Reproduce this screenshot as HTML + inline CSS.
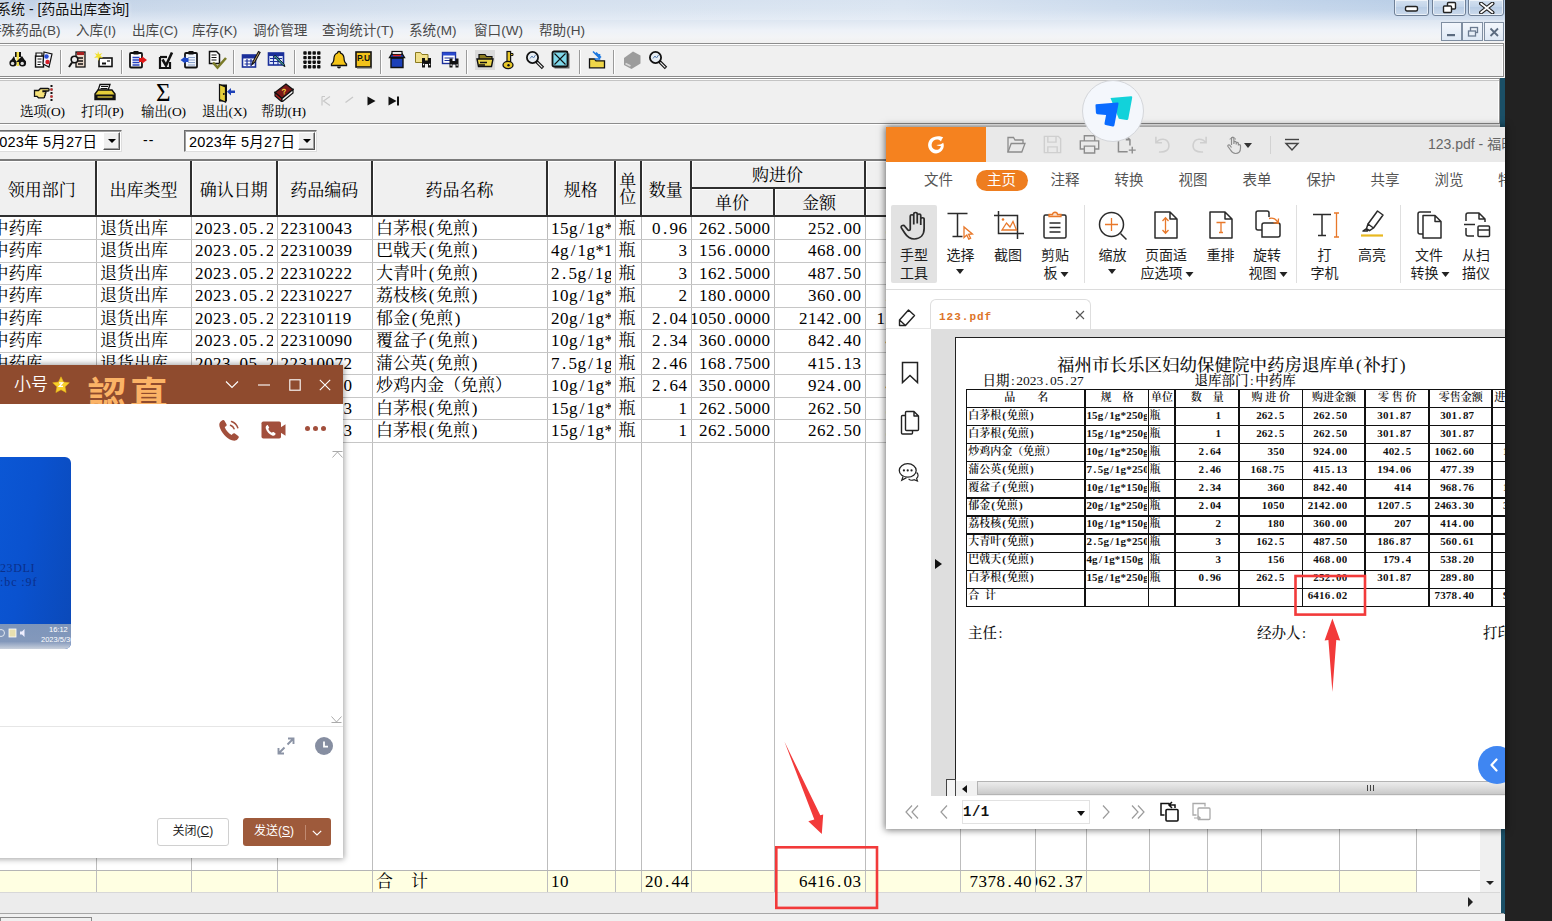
<!DOCTYPE html><html lang="zh-CN"><head><meta charset="utf-8"><title>药品出库查询</title><style>
*{box-sizing:border-box;margin:0;padding:0}
html,body{width:1552px;height:921px;overflow:hidden}
body{position:relative;background:#f0f0f0;font-family:"Liberation Sans","Noto Sans CJK SC",sans-serif;font-size:14px;color:#000}
.a{position:absolute}
i.p{display:inline-block;font-style:normal;text-align:center}
.sf{font-family:"Liberation Serif","Noto Serif CJK SC",serif}
#main{left:0;top:0;width:1505px;height:921px;background:#f0f0f0;overflow:hidden}
#title{left:0;top:0;width:1505px;height:20px;background:linear-gradient(180deg,rgba(255,255,255,0) 0,rgba(255,255,255,.1) 50%,rgba(240,244,250,.55) 100%),linear-gradient(90deg,#c0d1e6 0,#d3dfee 30%,#d9e4f1 60%,#bfd2e9 88%,#b4cae4 100%)}
#title span{position:absolute;left:-3px;top:-1.500px;font-size:14px;line-height:20px;white-space:nowrap;color:#111;text-shadow:0 0 4px #fff}
.wb{position:absolute;top:-1px;height:17px;border:1px solid #6f8097;border-radius:0 0 3px 3px;background:linear-gradient(#d3e0ef,#c3d5ea 45%,#b9cde5 50%,#cbdaec);box-shadow:inset 0 0 0 1px rgba(255,255,255,.6)}
#menu{left:0;top:20px;width:1505px;height:23px;background:linear-gradient(#dde6f1,#eef2f8 45%,#f3f4f6 75%,#f0f0f0)}
#menu span{position:absolute;top:0;font-size:13.600px;line-height:21px;color:#4a4a4a;white-space:nowrap}
.mb{position:absolute;top:22px;height:19px;border:1px solid #7f8ea1;background:linear-gradient(#f3f7fc,#dfe9f5);}
.tb{left:-4px;background:#f0f0f0;border:1px solid #8c8c8c;box-shadow:inset 0 1px 0 #fff,inset 0 2px 0 #c4c4c4,inset -1px 0 0 #fff,0 1px 0 #fff}
.sep{position:absolute;top:5.500px;width:2px;height:24px;border-left:1px solid #9a9a9a;border-right:1px solid #fff}
.ic{position:absolute;top:6px;width:20px;height:20px}
.t2{position:absolute;top:25.500px;font-family:"Liberation Serif","Noto Serif CJK SC",serif;font-size:13.5px;line-height:14px;white-space:nowrap;color:#000;letter-spacing:-.2px}
.dt{top:129.500px;height:22px;background:#fff;border:1px solid #6d6d6d;border-right-color:#ddd;border-bottom-color:#ddd;box-shadow:inset 1px 1px 0 #a0a0a0}
.dt span{position:absolute;left:4px;top:0;font-family:"Liberation Sans","Noto Sans CJK SC",sans-serif;font-size:14.5px;line-height:22px;white-space:nowrap;letter-spacing:.2px}
.dt b{position:absolute;right:1px;top:1px;width:17px;height:18px;background:#efefef;border:1px solid #fff;border-right-color:#555;border-bottom-color:#555;box-shadow:inset -1px -1px 0 #a0a0a0}
.dt b:after{content:"";position:absolute;left:4px;top:6px;border:4px solid transparent;border-top:4px solid #000;border-bottom:0}
#grid{left:0;top:159px;width:1480px;height:734px;background:#fff;border-top:2px solid #7b7b7b;overflow:hidden}
.hc{position:absolute;background:#f0f0f0;border-right:2px solid #2f2f2f;border-bottom:2px solid #2f2f2f;box-shadow:inset 1px 1px 0 #fff;font-family:"Liberation Serif","Noto Serif CJK SC",serif;font-size:17px;text-align:center;white-space:nowrap;overflow:hidden}
.vl{position:absolute;top:56px;width:1px;height:676px;background:#bdbdbd}
.hl{position:absolute;left:0;width:1480px;height:1px;background:#c6c6c6}
.r{position:absolute;left:0;width:1480px;height:22.5px;font-family:"Liberation Serif","Noto Serif CJK SC",serif;font-size:17px;line-height:23px;white-space:nowrap}
.r div{position:absolute;top:0;height:22.5px;overflow:hidden;padding:0 0 0 3px}
.r .ls{letter-spacing:.5px}
.r .n span{flex:none}
.r .n{display:flex;justify-content:flex-end;padding:0 3px 0 0}

#pdf{left:886px;top:127px;width:619px;height:702px;background:#fff;box-shadow:0 0 7px 1px rgba(0,0,0,.55);overflow:hidden;font-family:"Liberation Sans","Noto Sans CJK SC",sans-serif}
#pdf .tab{position:absolute;top:42px;font-size:14.5px;line-height:22px;color:#555;transform:translateX(-50%);white-space:nowrap}
#pdf .lb{position:absolute;font-size:14px;line-height:18px;color:#1e1e1e;transform:translateX(-50%);white-space:nowrap;text-align:center}
#pdf .dn{display:inline-block;width:0;height:0;border:4px solid transparent;border-top:5px solid #222;border-bottom:0;vertical-align:middle;margin-left:3px}
#pdf .rs{position:absolute;top:78px;width:1px;height:78px;background:#dfdfdf}
#page{left:69px;top:210px;width:560px;height:460px;background:#fff;border:1px solid #222;font-family:"Liberation Serif","Noto Serif CJK SC",serif;color:#111}
#page .t{position:absolute;white-space:nowrap}
#ptab{left:80px;top:52px;width:540px;height:218px;border:1.5px solid #111}
#ptab .v{position:absolute;top:0;width:1.500px;height:216px;background:#111}
#ptab .h{position:absolute;left:0;width:540px;height:1.3px;background:#111}
#ptab .c{position:absolute;font-size:11px;line-height:18px;height:18px;font-weight:600;white-space:nowrap;overflow:hidden}
#ptab .c i{font-style:normal;display:inline-block;text-align:center;width:5.7px}

#chat{left:-10px;top:365px;width:353px;height:493px;background:#fff;box-shadow:0 0 6px 1px rgba(0,0,0,.38);overflow:hidden;font-family:"Liberation Sans","Noto Sans CJK SC",sans-serif}
#chd{left:0;top:0;width:353px;height:39px;background:#8f4b2e;overflow:hidden}
</style></head><body>
<div id="main" class="a">
<div id="title" class="a"><span>系统 - [药品出库查询]</span>
<div class="wb" style="left:1394px;width:35px"><svg class="a" style="left:9px;top:4px" width="16" height="9"><rect x="1.5" y="2.5" width="12" height="4.5" rx="1.5" fill="#fff" stroke="#222" stroke-width="1.4"/></svg></div>
<div class="wb" style="left:1432px;width:34px"><svg class="a" style="left:9px;top:1px" width="16" height="13"><rect x="5.5" y="1.5" width="8" height="6.5" rx="1" fill="#fff" stroke="#222" stroke-width="1.4"/><rect x="1.5" y="5" width="8" height="6.5" rx="1" fill="#fff" stroke="#222" stroke-width="1.4"/></svg></div>
<div class="wb" style="left:1468px;width:36px"><svg class="a" style="left:10px;top:2px" width="16" height="12"><path d="M2 1.5 L13.5 10.5 M13.5 1.5 L2 10.5" stroke="#222" stroke-width="4" stroke-linecap="round"/><path d="M2 1.5 L13.5 10.5 M13.5 1.5 L2 10.5" stroke="#fff" stroke-width="1.6" stroke-linecap="round"/></svg></div>
</div>
<div id="menu" class="a">
<span style="left:-12px">特殊药品(B)</span>
<span style="left:76px">入库(I)</span>
<span style="left:132px">出库(C)</span>
<span style="left:192px">库存(K)</span>
<span style="left:253px">调价管理</span>
<span style="left:322px">查询统计(T)</span>
<span style="left:409px">系统(M)</span>
<span style="left:474px">窗口(W)</span>
<span style="left:539px">帮助(H)</span>
</div>
<div class="mb" style="left:1441px;width:21px"><svg class="a" style="left:5px;top:11px" width="9" height="3"><rect width="8" height="2.2" fill="#5b6b7f"/></svg></div>
<div class="mb" style="left:1462px;width:21px"><svg class="a" style="left:4px;top:3px" width="12" height="12"><rect x="3.5" y="1.5" width="7" height="5" fill="none" stroke="#6b7b90" stroke-width="1.3"/><rect x="1.5" y="5" width="7" height="5" fill="#e8eff8" stroke="#6b7b90" stroke-width="1.3"/></svg></div>
<div class="mb" style="left:1484px;width:20px"><svg class="a" style="left:4px;top:4px" width="11" height="11"><path d="M1.5 1.5 L9 9 M9 1.5 L1.5 9" stroke="#5b6b7f" stroke-width="1.8"/></svg></div>
<div class="a tb" style="top:43px;width:1508px;height:34px">
<div class="sep" style="left:63px"></div><div class="sep" style="left:123.5px"></div><div class="sep" style="left:235.5px"></div><div class="sep" style="left:296.5px"></div><div class="sep" style="left:383px"></div><div class="sep" style="left:469px"></div><div class="sep" style="left:581.5px"></div><div class="sep" style="left:616px"></div><svg class="ic" style="left:11px" viewBox="0 0 20 20" ><path d="M7 2h2v5H7zM11 2h2v5h-2z" fill="#111"/><rect x="8.6" y="2" width="2.4" height="14" fill="#f4e04a"/><path d="M6 6l-4 6h6zM14 6l-6 6h10z" fill="#111"/><circle cx="5" cy="13" r="3.6" fill="#111"/><circle cx="14.5" cy="13" r="3.6" fill="#111"/><circle cx="4.6" cy="13.4" r="1.7" fill="#ddd"/><circle cx="14.2" cy="13.4" r="1.7" fill="#ddd"/></svg><svg class="ic" style="left:36.5px" viewBox="0 0 20 20" ><rect x="1.5" y="6" width="8" height="11" fill="#fff" stroke="#111" stroke-width="1.4"/><path d="M2 3h6v3H2z" fill="#fff" stroke="#111" stroke-width="1.2"/><path d="M3.5 9h4M3.5 12h4M3.5 14.5h3" stroke="#111" stroke-width="1.2"/><path d="M10 2l8 2-3 13-6-3z" fill="#f4f4ff" stroke="#111" stroke-width="1.2"/><circle cx="12.5" cy="6.5" r="2.2" fill="#2b50d8"/><circle cx="13.5" cy="12" r="2.2" fill="#d8202b"/></svg><svg class="ic" style="left:71px" viewBox="0 0 20 20" ><rect x="8" y="2" width="9" height="15" fill="#e9d7c8" stroke="#111" stroke-width="1.3"/><path d="M9 2h7v3H9z" fill="#a82020"/><path d="M10 8h5M10 11h5M10 14h5" stroke="#111" stroke-width="1.3"/><circle cx="6.5" cy="9.5" r="3.3" fill="#eee" stroke="#111" stroke-width="1.6"/><path d="M4 12.5L1 17" stroke="#111" stroke-width="2"/></svg><svg class="ic" style="left:97px" viewBox="0 0 20 20" ><rect x="5" y="8" width="13" height="8.5" fill="#fff" stroke="#111" stroke-width="1.6"/><path d="M8 12.5h4v2H8z" fill="#111"/><path d="M13 11h3" stroke="#111" stroke-width="1.2"/><path d="M4 1l1.2 3.2L8.5 3 6.3 5.6 9 8 5.6 7.6 4.5 11 3.6 7.6 0 8l2.6-2.4L.5 3l3 1.2z" fill="#f2e030"/></svg><svg class="ic" style="left:131px" viewBox="0 0 20 20" ><rect x="2" y="3" width="12" height="14.5" rx="1" fill="#fff" stroke="#111" stroke-width="1.8"/><rect x="5.5" y="1" width="5" height="3.5" fill="#111"/><path d="M4.5 7.5h7M4.5 10h7M4.5 12.5h7M4.5 15h7" stroke="#2440c0" stroke-width="1.4"/><path d="M11 8l3 0 0-1.8 5 3.8-5 3.8 0-1.8-3 0z" fill="#e01818"/></svg><svg class="ic" style="left:160px" viewBox="0 0 20 20" ><path d="M3 7v11h10V12" fill="none" stroke="#111" stroke-width="2.2"/><path d="M3 7h7" stroke="#111" stroke-width="2.2"/><path d="M5.5 9.5l3.5 6 6-13" fill="none" stroke="#111" stroke-width="2.6"/></svg><svg class="ic" style="left:183px" viewBox="0 0 20 20" ><rect x="5" y="3" width="12" height="14.5" rx="1" fill="#eef3fb" stroke="#111" stroke-width="1.8"/><rect x="8.5" y="1" width="5" height="3.5" fill="#111"/><path d="M8 7.5h7M8 10h7M8 12.5h7M8 15h7" stroke="#8aa0c8" stroke-width="1.2"/><path d="M8.5 8l-3 0 0-1.8-5 3.8 5 3.8 0-1.8 3 0z" fill="#1c48c8"/></svg><svg class="ic" style="left:210px" viewBox="0 0 20 20" ><path d="M2.5 1.5h7l3 3v9h-10z" fill="#fff" stroke="#111" stroke-width="1.5"/><path d="M4.5 5h5M4.5 7.500h5M4.5 10h5" stroke="#111" stroke-width="1.2"/><path d="M6 12.5l4.5 5L19 8" fill="none" stroke="#7a7a28" stroke-width="2.6"/></svg><svg class="ic" style="left:244px" viewBox="0 0 20 20" ><rect x="1.500" y="5" width="13" height="12" fill="#fff" stroke="#1a2f9a" stroke-width="1.6"/><rect x="1.500" y="5" width="13" height="3.5" fill="#1a2f9a"/><path d="M3.500 11h9M3.500 14h9M6 9v7M10 9v7" stroke="#1a2f9a" stroke-width="1.2"/><path d="M17.500 1.500l-5.500 10-1 3 2.600-2 5.500-10z" fill="#c9a36a" stroke="#111" stroke-width="1.1"/></svg><svg class="ic" style="left:270px" viewBox="0 0 20 20" ><rect x="1.500" y="3" width="15" height="12" fill="#dce6fa" stroke="#1a2f9a" stroke-width="1.6"/><rect x="1.500" y="3" width="15" height="3" fill="#1a2f9a"/><path d="M3 8.500h12M3 11.500h12M6.500 6v9M11 6v9" stroke="#1a2f9a" stroke-width="1.100"/><path d="M7 6.500l9 9 2 1-1-2.300-9-9z" fill="#39b4c8" stroke="#111" stroke-width="1"/></svg><svg class="ic" style="left:305px" viewBox="0 0 20 20" ><rect x="1.3" y="1.3" width="3.400" height="3.400" rx=".8" fill="#111"/><rect x="5.9" y="1.3" width="3.400" height="3.400" rx=".8" fill="#111"/><rect x="10.5" y="1.3" width="3.400" height="3.400" rx=".8" fill="#111"/><rect x="15.1" y="1.3" width="3.400" height="3.400" rx=".8" fill="#111"/><rect x="1.3" y="5.9" width="3.400" height="3.400" rx=".8" fill="#111"/><rect x="5.9" y="5.9" width="3.400" height="3.400" rx=".8" fill="#111"/><rect x="10.5" y="5.9" width="3.400" height="3.400" rx=".8" fill="#111"/><rect x="15.1" y="5.9" width="3.400" height="3.400" rx=".8" fill="#111"/><rect x="1.3" y="10.5" width="3.400" height="3.400" rx=".8" fill="#111"/><rect x="5.9" y="10.5" width="3.400" height="3.400" rx=".8" fill="#111"/><rect x="10.5" y="10.5" width="3.400" height="3.400" rx=".8" fill="#111"/><rect x="15.1" y="10.5" width="3.400" height="3.400" rx=".8" fill="#111"/><rect x="1.3" y="15.1" width="3.400" height="3.400" rx=".8" fill="#111"/><rect x="5.9" y="15.1" width="3.400" height="3.400" rx=".8" fill="#111"/><rect x="10.5" y="15.1" width="3.400" height="3.400" rx=".8" fill="#111"/><rect x="15.1" y="15.1" width="3.400" height="3.400" rx=".8" fill="#111"/></svg><svg class="ic" style="left:331.5px" viewBox="0 0 20 20" ><path d="M10 1.500c1 0 1.600.8 1.600 1.600 3 1 3.600 4 3.600 7 0 2 1.200 3 2.300 4v1.400H2.500V14c1.100-1 2.300-2 2.300-4 0-3 .6-6 3.600-7 0-.8.600-1.500 1.600-1.500z" fill="#f5c518" stroke="#111" stroke-width="1.300"/><path d="M8 16.500a2 2 0 0 0 4 0z" fill="#111"/></svg><svg class="ic" style="left:356.5px" viewBox="0 0 20 20" ><rect x="2" y="2" width="15" height="15" fill="#f2c21a" stroke="#111" stroke-width="1.600"/><rect x="3" y="17" width="15" height="1.500" fill="#555"/><text x="9.500" y="10.500" font-family="Liberation Sans,sans-serif" font-weight="bold" font-size="8.500" text-anchor="middle" fill="#111">P.U</text></svg><svg class="ic" style="left:390px" viewBox="0 0 20 20" ><path d="M4 8h12v9.500H4z" fill="#1c40b8" stroke="#111" stroke-width="1.400"/><path d="M2.500 7.500l2.500-4h10l2.500 4z" fill="#1c40b8" stroke="#111" stroke-width="1.300"/><rect x="5" y="1.500" width="10" height="3" fill="#fff" stroke="#111" stroke-width="1.200"/><path d="M6 5.500h8" stroke="#d22" stroke-width="1.400"/></svg><svg class="ic" style="left:416.5px" viewBox="0 0 20 20" ><path d="M1.500 2.500h5l1.500 2h6v8h-12.500z" fill="#f1e08a" stroke="#8a7a20" stroke-width="1"/><path d="M8 8h3v9.500H8zM14 8h3v9.500h-3z" fill="#111"/><path d="M10.500 10.500h4v3.500h-4z" fill="#111"/><path d="M9 14.500h1.200M15 14.500h1.200" stroke="#fff" stroke-width="1.400"/></svg><svg class="ic" style="left:444px" viewBox="0 0 20 20" ><rect x="1.500" y="2.500" width="13" height="11" fill="#fff" stroke="#1a2f9a" stroke-width="1.400"/><rect x="1.500" y="2.500" width="13" height="3" fill="#2a4ad0"/><path d="M3.500 8h9M3.500 10.500h6" stroke="#1a2f9a" stroke-width="1.100"/><path d="M8.500 8.500h3v9H8.500zM14.500 8.500h3v9h-3z" fill="#111"/><path d="M11 11h4v3.500h-4z" fill="#111"/><path d="M9.500 15h1.200M15.500 15h1.200" stroke="#fff" stroke-width="1.400"/></svg><svg class="ic" style="left:478px" viewBox="0 0 20 20" ><rect x="0" y="0" width="20" height="20" fill="#dadada"/><path d="M4 4.500h6l1.500 2H17v3H4z" fill="#8a7a20" stroke="#111" stroke-width="1.200"/><path d="M2 9h16l-1.500 7.500H3.500z" fill="#e8d24a" stroke="#111" stroke-width="1.400"/><path d="M5 12.500h7M4 15h6" stroke="#111" stroke-width="1.300"/></svg><svg class="ic" style="left:502px" viewBox="0 0 20 20" ><rect x="8" y="1.500" width="3.600" height="11" fill="#e8c828" stroke="#111" stroke-width="1.200"/><path d="M11.500 3.500h2.500v2h-2.500z" fill="#e8c828" stroke="#111" stroke-width="1"/><ellipse cx="9" cy="15" rx="5" ry="3.600" fill="#e8c828" stroke="#111" stroke-width="1.300"/><circle cx="9.500" cy="15.300" r="1.200" fill="#111"/></svg><svg class="ic" style="left:528px" viewBox="0 0 20 20" ><circle cx="7.500" cy="7.500" r="5.600" fill="#e8eef4" stroke="#111" stroke-width="1.800"/><path d="M5 8.500l2-2.500 1.500 2 2-3" fill="none" stroke="#5a80b0" stroke-width="1"/><path d="M11.500 11.500l6.500 6.500" stroke="#111" stroke-width="3.400"/><path d="M12.300 12.300l5 5" stroke="#f0f0f0" stroke-width="1.200"/></svg><svg class="ic" style="left:554px" viewBox="0 0 20 20" ><rect x="3.500" y="3.500" width="15" height="15" fill="#666"/><rect x="1.500" y="1.500" width="15" height="15" rx="1.500" fill="#7fd8ea" stroke="#111" stroke-width="1.800"/><path d="M3.500 3.500l11 11M14.500 3.500l-11 11" stroke="#111" stroke-width="1.100"/></svg><svg class="ic" style="left:589.5px" viewBox="0 0 20 20" ><path d="M2.500 9h5l1.500 1.800h8.500v7h-15z" fill="#efd648" stroke="#111" stroke-width="1.300"/><path d="M6 1.500l6 6M9 2.500l5 5M12.500 4v5h-5" fill="none" stroke="#1c78e0" stroke-width="1.600"/></svg><svg class="ic" style="left:625px" viewBox="0 0 20 20" ><path d="M2 8l9-6.500 7.500 4v8L9.500 19 2 15z" fill="#9c9c9c"/><path d="M3.500 13.500l5 2.500" stroke="#d8d8d8" stroke-width="1.600"/></svg><svg class="ic" style="left:650.5px" viewBox="0 0 20 20" ><circle cx="7.500" cy="7.500" r="5.600" fill="#e8eef4" stroke="#111" stroke-width="1.800"/><path d="M5 8.500l2-2.500 1.500 2 2-3" fill="none" stroke="#5a80b0" stroke-width="1"/><path d="M11.500 11.500l6.500 6.500" stroke="#111" stroke-width="3.400"/><path d="M12.300 12.300l5 5" stroke="#f0f0f0" stroke-width="1.200"/></svg>
</div>
<div class="a tb" style="top:78px;width:1503.500px;height:46px">
<span class="t2" style="left:-49px">刷新(R)</span><span class="t2" style="left:23px">选项(O)</span><span class="t2" style="left:84px">打印(P)</span><span class="t2" style="left:144px">输出(O)</span><span class="t2" style="left:205px">退出(X)</span><span class="t2" style="left:264px">帮助(H)</span><svg class="a" style="left:36px;top:5px" width="22" height="18" viewBox="0 0 22 18"><path d="M1.500 6.500h4l2-2h7.500c1.500 0 1.500 2.500 0 2.500H10v.5h2c1.300 0 1.300 2.200 0 2.200h-.5c1.200 0 1.200 2.100 0 2.100h-.6c1 0 1 2-.2 2H5.500l-1.500-1.500H1.500z" fill="#f6e27a" stroke="#111" stroke-width="1.300"/><path d="M18.500 1v16" stroke="#111" stroke-width="2" stroke-dasharray="2 1.500"/><path d="M18.500 4.500v2M18.500 11.500v2" stroke="#d22" stroke-width="2"/></svg><svg class="a" style="left:96.5px;top:4px" width="22" height="19" viewBox="0 0 22 19"><path d="M6 1.500h10l-2 6H4z" fill="#fff" stroke="#111" stroke-width="1.300"/><path d="M7 3.500h7M6.500 5.500h7" stroke="#111" stroke-width="1"/><path d="M1 11l3-4h14l3 4v5.500H1z" fill="#e6cf3a" stroke="#111" stroke-width="1.400"/><path d="M1 11.500h20v5H1z" fill="#111"/><path d="M3.500 14h15" stroke="#e6cf3a" stroke-width="1.300"/></svg><span class="a" style="left:159px;top:1px;font-family:'Liberation Serif',serif;font-size:25px;line-height:26px;color:#000">Σ</span><svg class="a" style="left:218.5px;top:3.5px" width="20" height="20" viewBox="0 0 20 20"><path d="M3 1.500h8v17H3z" fill="#111"/><path d="M3.500 1.500l6 2.500v15l-6-2.500z" fill="#e6cf3a" stroke="#111" stroke-width="1.200"/><circle cx="7.800" cy="11" r=".9" fill="#111"/><path d="M19 7.500h-4V5l-4 3.700 4 3.700V10h4z" fill="#1c40b8"/></svg><svg class="a" style="left:276px;top:3px" width="22" height="20" viewBox="0 0 22 20"><path d="M2 10.500L13 2l7 5.500L9 16.500z" fill="#7a1818" stroke="#111" stroke-width="1.300"/><path d="M2 10.500v3.500l7 6v-3.500z" fill="#b02020" stroke="#111" stroke-width="1.200"/><path d="M9 16.500L20 7.500V11L9 20z" fill="#f2f2f2" stroke="#111" stroke-width="1.200"/><text x="11" y="12.500" font-family="Liberation Sans,sans-serif" font-weight="bold" font-size="8" fill="#f2d23a" text-anchor="middle" transform="rotate(-8 11 10)">?</text></svg><svg class="a" style="left:323px;top:16px" width="12" height="12" viewBox="0 0 12 12"><path d="M2 1.500v9M2 1.500h3M10 1.500L3.500 6l6.500 4.500" fill="none" stroke="#c8c8c8" stroke-width="1.200"/></svg><svg class="a" style="left:346px;top:16px" width="12" height="12" viewBox="0 0 12 12"><path d="M10 2L2.500 7.500" fill="none" stroke="#c8c8c8" stroke-width="1.300"/></svg><svg class="a" style="left:367.5px;top:16px" width="12" height="12" viewBox="0 0 12 12"><path d="M2.500 1.500l8 4.500-8 4.500z" fill="#111"/></svg><svg class="a" style="left:389.5px;top:16px" width="14" height="12" viewBox="0 0 14 12"><path d="M1.500 1.500l8 4.500-8 4.500z" fill="#111"/><path d="M11 1.500v9" stroke="#111" stroke-width="2"/></svg>
</div>
<div class="a" style="left:1500px;top:78px;width:5px;height:49px;background:#1b4f66"></div>
<div class="a" style="left:1501px;top:829px;width:4px;height:85px;background:#1b4f66"></div>
<div class="a dt" style="left:-14px;width:136px"><span>2023年 5月27日</span><b></b></div>
<div class="a" style="left:143px;top:131px;font-size:14px;line-height:19px;letter-spacing:1px">--</div>
<div class="a dt" style="left:184px;width:133px"><span>2023年 5月27日</span><b></b></div>
<div id="grid" class="a">
<div class="hc" style="left:-11.5px;top:0px;width:108.5px;height:56px;line-height:59px;">领用部门</div>
<div class="hc" style="left:97px;top:0px;width:95px;height:56px;line-height:59px;">出库类型</div>
<div class="hc" style="left:192px;top:0px;width:85.5px;height:56px;line-height:59px;">确认日期</div>
<div class="hc" style="left:277.5px;top:0px;width:95.5px;height:56px;line-height:59px;">药品编码</div>
<div class="hc" style="left:373px;top:0px;width:175px;height:56px;line-height:59px;">药品名称</div>
<div class="hc" style="left:548px;top:0px;width:67.5px;height:56px;line-height:59px;">规格</div>
<div class="hc" style="left:615.5px;top:0;width:26.5px;height:56px;line-height:16.4px;padding-top:13px">单<br>位</div>
<div class="hc" style="left:642px;top:0px;width:49.5px;height:56px;line-height:59px;">数量</div>
<div class="hc" style="left:691.5px;top:0px;width:174px;height:28px;line-height:29px;">购进价</div>
<div class="hc" style="left:691.5px;top:28px;width:83px;height:28px;line-height:29px;">单价</div>
<div class="hc" style="left:774.5px;top:28px;width:91px;height:28px;line-height:29px;">金额</div>
<div class="hc" style="left:865.5px;top:0px;width:170.5px;height:28px;line-height:29px;">零售价</div>
<div class="hc" style="left:865.5px;top:28px;width:95.5px;height:28px;line-height:29px;">单价</div>
<div class="hc" style="left:961px;top:28px;width:75px;height:28px;line-height:29px;">金额</div>
<div class="hc" style="left:1036px;top:0px;width:51px;height:56px;line-height:59px;">进销差价</div>
<div class="hc" style="left:1087px;top:0px;width:63px;height:56px;line-height:59px;">批号</div>
<div class="hc" style="left:1150px;top:0px;width:58px;height:56px;line-height:59px;">有效期</div>
<div class="hc" style="left:1208px;top:0px;width:54px;height:56px;line-height:59px;">产地</div>
<div class="hc" style="left:1262px;top:0px;width:78px;height:56px;line-height:59px;">供货单位</div>
<div class="hc" style="left:1340px;top:0px;width:77px;height:56px;line-height:59px;">操作员</div>
<div class="hc" style="left:1417px;top:0px;width:64px;height:56px;line-height:59px;"></div>
<div class="a" style="left:0;top:708.5px;width:1416px;height:22px;background:#ffffe2"></div>
<div class="vl" style="left:96px"></div>
<div class="vl" style="left:191px"></div>
<div class="vl" style="left:276.5px"></div>
<div class="vl" style="left:372px"></div>
<div class="vl" style="left:547px"></div>
<div class="vl" style="left:614.5px"></div>
<div class="vl" style="left:641px"></div>
<div class="vl" style="left:690.5px"></div>
<div class="vl" style="left:773.5px"></div>
<div class="vl" style="left:864.5px"></div>
<div class="vl" style="left:960px"></div>
<div class="vl" style="left:1035px"></div>
<div class="vl" style="left:1086px"></div>
<div class="vl" style="left:1149px"></div>
<div class="vl" style="left:1207px"></div>
<div class="vl" style="left:1261px"></div>
<div class="vl" style="left:1339px"></div>
<div class="vl" style="left:1416px"></div>
<div class="r" style="top:56.00px">
<div style="left:-11.5px;width:103.5px">中药库</div>
<div style="left:97px;width:90px">退货出库</div>
<div class="ls" style="left:192px;width:80.5px">2023<i class="p" style="width:8.5px">.</i>05<i class="p" style="width:8.5px">.</i>27</div>
<div class="ls" style="left:277.5px;width:90.5px">22310043</div>
<div style="left:373px;width:170px">白茅根<i class="p" style="width:9px">(</i>免煎<i class="p" style="width:9px">)</i></div>
<div class="ls" style="left:548px;width:62.5px">15g<i class="p" style="width:8.5px">/</i>1g<i class="p" style="width:8.5px">*</i>250g</div>
<div style="left:615.5px;width:21.5px">瓶</div>
<div class="n ls" style="left:642px;width:48.5px"><span>0<i class="p" style="width:8.5px">.</i>96</span></div>
<div class="n ls" style="left:691.5px;width:82px"><span>262<i class="p" style="width:8.5px">.</i>5000</span></div>
<div class="n ls" style="left:774.5px;width:90px"><span>252<i class="p" style="width:8.5px">.</i>00</span></div>
<div class="n ls" style="left:865.5px;width:94.5px"><span>301<i class="p" style="width:8.5px">.</i>8700</span></div>
<div class="n ls" style="left:961px;width:74px"><span>289<i class="p" style="width:8.5px">.</i>80</span></div>
<div class="n ls" style="left:1036px;width:50px"><span>37<i class="p" style="width:8.5px">.</i>80</span></div>
</div>
<div class="hl" style="top:78.48px"></div>
<div class="r" style="top:78.48px">
<div style="left:-11.5px;width:103.5px">中药库</div>
<div style="left:97px;width:90px">退货出库</div>
<div class="ls" style="left:192px;width:80.5px">2023<i class="p" style="width:8.5px">.</i>05<i class="p" style="width:8.5px">.</i>27</div>
<div class="ls" style="left:277.5px;width:90.5px">22310039</div>
<div style="left:373px;width:170px">巴戟天<i class="p" style="width:9px">(</i>免煎<i class="p" style="width:9px">)</i></div>
<div class="ls" style="left:548px;width:62.5px">4g<i class="p" style="width:8.5px">/</i>1g<i class="p" style="width:8.5px">*</i>150g</div>
<div style="left:615.5px;width:21.5px">瓶</div>
<div class="n ls" style="left:642px;width:48.5px"><span>3</span></div>
<div class="n ls" style="left:691.5px;width:82px"><span>156<i class="p" style="width:8.5px">.</i>0000</span></div>
<div class="n ls" style="left:774.5px;width:90px"><span>468<i class="p" style="width:8.5px">.</i>00</span></div>
<div class="n ls" style="left:865.5px;width:94.5px"><span>179<i class="p" style="width:8.5px">.</i>4000</span></div>
<div class="n ls" style="left:961px;width:74px"><span>538<i class="p" style="width:8.5px">.</i>20</span></div>
<div class="n ls" style="left:1036px;width:50px"><span>70<i class="p" style="width:8.5px">.</i>20</span></div>
</div>
<div class="hl" style="top:100.96px"></div>
<div class="r" style="top:100.96px">
<div style="left:-11.5px;width:103.5px">中药库</div>
<div style="left:97px;width:90px">退货出库</div>
<div class="ls" style="left:192px;width:80.5px">2023<i class="p" style="width:8.5px">.</i>05<i class="p" style="width:8.5px">.</i>27</div>
<div class="ls" style="left:277.5px;width:90.5px">22310222</div>
<div style="left:373px;width:170px">大青叶<i class="p" style="width:9px">(</i>免煎<i class="p" style="width:9px">)</i></div>
<div class="ls" style="left:548px;width:62.5px">2<i class="p" style="width:8.5px">.</i>5g<i class="p" style="width:8.5px">/</i>1g<i class="p" style="width:8.5px">*</i>250g</div>
<div style="left:615.5px;width:21.5px">瓶</div>
<div class="n ls" style="left:642px;width:48.5px"><span>3</span></div>
<div class="n ls" style="left:691.5px;width:82px"><span>162<i class="p" style="width:8.5px">.</i>5000</span></div>
<div class="n ls" style="left:774.5px;width:90px"><span>487<i class="p" style="width:8.5px">.</i>50</span></div>
<div class="n ls" style="left:865.5px;width:94.5px"><span>186<i class="p" style="width:8.5px">.</i>8700</span></div>
<div class="n ls" style="left:961px;width:74px"><span>560<i class="p" style="width:8.5px">.</i>61</span></div>
<div class="n ls" style="left:1036px;width:50px"><span>73<i class="p" style="width:8.5px">.</i>11</span></div>
</div>
<div class="hl" style="top:123.44px"></div>
<div class="r" style="top:123.44px">
<div style="left:-11.5px;width:103.5px">中药库</div>
<div style="left:97px;width:90px">退货出库</div>
<div class="ls" style="left:192px;width:80.5px">2023<i class="p" style="width:8.5px">.</i>05<i class="p" style="width:8.5px">.</i>27</div>
<div class="ls" style="left:277.5px;width:90.5px">22310227</div>
<div style="left:373px;width:170px">荔枝核<i class="p" style="width:9px">(</i>免煎<i class="p" style="width:9px">)</i></div>
<div class="ls" style="left:548px;width:62.5px">10g<i class="p" style="width:8.5px">/</i>1g<i class="p" style="width:8.5px">*</i>150g</div>
<div style="left:615.5px;width:21.5px">瓶</div>
<div class="n ls" style="left:642px;width:48.5px"><span>2</span></div>
<div class="n ls" style="left:691.5px;width:82px"><span>180<i class="p" style="width:8.5px">.</i>0000</span></div>
<div class="n ls" style="left:774.5px;width:90px"><span>360<i class="p" style="width:8.5px">.</i>00</span></div>
<div class="n ls" style="left:865.5px;width:94.5px"><span>207<i class="p" style="width:8.5px">.</i>0000</span></div>
<div class="n ls" style="left:961px;width:74px"><span>414<i class="p" style="width:8.5px">.</i>00</span></div>
<div class="n ls" style="left:1036px;width:50px"><span>54<i class="p" style="width:8.5px">.</i>00</span></div>
</div>
<div class="hl" style="top:145.92px"></div>
<div class="r" style="top:145.92px">
<div style="left:-11.5px;width:103.5px">中药库</div>
<div style="left:97px;width:90px">退货出库</div>
<div class="ls" style="left:192px;width:80.5px">2023<i class="p" style="width:8.5px">.</i>05<i class="p" style="width:8.5px">.</i>27</div>
<div class="ls" style="left:277.5px;width:90.5px">22310119</div>
<div style="left:373px;width:170px">郁金<i class="p" style="width:9px">(</i>免煎<i class="p" style="width:9px">)</i></div>
<div class="ls" style="left:548px;width:62.5px">20g<i class="p" style="width:8.5px">/</i>1g<i class="p" style="width:8.5px">*</i>250g</div>
<div style="left:615.5px;width:21.5px">瓶</div>
<div class="n ls" style="left:642px;width:48.5px"><span>2<i class="p" style="width:8.5px">.</i>04</span></div>
<div class="n ls" style="left:691.5px;width:82px"><span>1050<i class="p" style="width:8.5px">.</i>0000</span></div>
<div class="n ls" style="left:774.5px;width:90px"><span>2142<i class="p" style="width:8.5px">.</i>00</span></div>
<div class="n ls" style="left:865.5px;width:94.5px"><span>1207<i class="p" style="width:8.5px">.</i>5000</span></div>
<div class="n ls" style="left:961px;width:74px"><span>2463<i class="p" style="width:8.5px">.</i>30</span></div>
<div class="n ls" style="left:1036px;width:50px"><span>321<i class="p" style="width:8.5px">.</i>30</span></div>
</div>
<div class="hl" style="top:168.40px"></div>
<div class="r" style="top:168.40px">
<div style="left:-11.5px;width:103.5px">中药库</div>
<div style="left:97px;width:90px">退货出库</div>
<div class="ls" style="left:192px;width:80.5px">2023<i class="p" style="width:8.5px">.</i>05<i class="p" style="width:8.5px">.</i>27</div>
<div class="ls" style="left:277.5px;width:90.5px">22310090</div>
<div style="left:373px;width:170px">覆盆子<i class="p" style="width:9px">(</i>免煎<i class="p" style="width:9px">)</i></div>
<div class="ls" style="left:548px;width:62.5px">10g<i class="p" style="width:8.5px">/</i>1g<i class="p" style="width:8.5px">*</i>150g</div>
<div style="left:615.5px;width:21.5px">瓶</div>
<div class="n ls" style="left:642px;width:48.5px"><span>2<i class="p" style="width:8.5px">.</i>34</span></div>
<div class="n ls" style="left:691.5px;width:82px"><span>360<i class="p" style="width:8.5px">.</i>0000</span></div>
<div class="n ls" style="left:774.5px;width:90px"><span>842<i class="p" style="width:8.5px">.</i>40</span></div>
<div class="n ls" style="left:865.5px;width:94.5px"><span>414<i class="p" style="width:8.5px">.</i>0000</span></div>
<div class="n ls" style="left:961px;width:74px"><span>968<i class="p" style="width:8.5px">.</i>76</span></div>
<div class="n ls" style="left:1036px;width:50px"><span>126<i class="p" style="width:8.5px">.</i>36</span></div>
</div>
<div class="hl" style="top:190.88px"></div>
<div class="r" style="top:190.88px">
<div style="left:-11.5px;width:103.5px">中药库</div>
<div style="left:97px;width:90px">退货出库</div>
<div class="ls" style="left:192px;width:80.5px">2023<i class="p" style="width:8.5px">.</i>05<i class="p" style="width:8.5px">.</i>27</div>
<div class="ls" style="left:277.5px;width:90.5px">22310072</div>
<div style="left:373px;width:170px">蒲公英<i class="p" style="width:9px">(</i>免煎<i class="p" style="width:9px">)</i></div>
<div class="ls" style="left:548px;width:62.5px">7<i class="p" style="width:8.5px">.</i>5g<i class="p" style="width:8.5px">/</i>1g<i class="p" style="width:8.5px">*</i>250g</div>
<div style="left:615.5px;width:21.5px">瓶</div>
<div class="n ls" style="left:642px;width:48.5px"><span>2<i class="p" style="width:8.5px">.</i>46</span></div>
<div class="n ls" style="left:691.5px;width:82px"><span>168<i class="p" style="width:8.5px">.</i>7500</span></div>
<div class="n ls" style="left:774.5px;width:90px"><span>415<i class="p" style="width:8.5px">.</i>13</span></div>
<div class="n ls" style="left:865.5px;width:94.5px"><span>194<i class="p" style="width:8.5px">.</i>0600</span></div>
<div class="n ls" style="left:961px;width:74px"><span>477<i class="p" style="width:8.5px">.</i>39</span></div>
<div class="n ls" style="left:1036px;width:50px"><span>62<i class="p" style="width:8.5px">.</i>26</span></div>
</div>
<div class="hl" style="top:213.36px"></div>
<div class="r" style="top:213.36px">
<div style="left:-11.5px;width:103.5px">中药库</div>
<div style="left:97px;width:90px">退货出库</div>
<div class="ls" style="left:192px;width:80.5px">2023<i class="p" style="width:8.5px">.</i>05<i class="p" style="width:8.5px">.</i>27</div>
<div class="ls" style="left:277.5px;width:90.5px">22310100</div>
<div style="left:373px;width:170px">炒鸡内金（免煎）</div>
<div class="ls" style="left:548px;width:62.5px">10g<i class="p" style="width:8.5px">/</i>1g<i class="p" style="width:8.5px">*</i>250g</div>
<div style="left:615.5px;width:21.5px">瓶</div>
<div class="n ls" style="left:642px;width:48.5px"><span>2<i class="p" style="width:8.5px">.</i>64</span></div>
<div class="n ls" style="left:691.5px;width:82px"><span>350<i class="p" style="width:8.5px">.</i>0000</span></div>
<div class="n ls" style="left:774.5px;width:90px"><span>924<i class="p" style="width:8.5px">.</i>00</span></div>
<div class="n ls" style="left:865.5px;width:94.5px"><span>402<i class="p" style="width:8.5px">.</i>5000</span></div>
<div class="n ls" style="left:961px;width:74px"><span>1062<i class="p" style="width:8.5px">.</i>60</span></div>
<div class="n ls" style="left:1036px;width:50px"><span>138<i class="p" style="width:8.5px">.</i>60</span></div>
</div>
<div class="hl" style="top:235.84px"></div>
<div class="r" style="top:235.84px">
<div style="left:-11.5px;width:103.5px">中药库</div>
<div style="left:97px;width:90px">退货出库</div>
<div class="ls" style="left:192px;width:80.5px">2023<i class="p" style="width:8.5px">.</i>05<i class="p" style="width:8.5px">.</i>27</div>
<div class="ls" style="left:277.5px;width:90.5px">22310043</div>
<div style="left:373px;width:170px">白茅根<i class="p" style="width:9px">(</i>免煎<i class="p" style="width:9px">)</i></div>
<div class="ls" style="left:548px;width:62.5px">15g<i class="p" style="width:8.5px">/</i>1g<i class="p" style="width:8.5px">*</i>250g</div>
<div style="left:615.5px;width:21.5px">瓶</div>
<div class="n ls" style="left:642px;width:48.5px"><span>1</span></div>
<div class="n ls" style="left:691.5px;width:82px"><span>262<i class="p" style="width:8.5px">.</i>5000</span></div>
<div class="n ls" style="left:774.5px;width:90px"><span>262<i class="p" style="width:8.5px">.</i>50</span></div>
<div class="n ls" style="left:865.5px;width:94.5px"><span>301<i class="p" style="width:8.5px">.</i>8700</span></div>
<div class="n ls" style="left:961px;width:74px"><span>301<i class="p" style="width:8.5px">.</i>87</span></div>
<div class="n ls" style="left:1036px;width:50px"><span>39<i class="p" style="width:8.5px">.</i>37</span></div>
</div>
<div class="hl" style="top:258.32px"></div>
<div class="r" style="top:258.32px">
<div style="left:-11.5px;width:103.5px">中药库</div>
<div style="left:97px;width:90px">退货出库</div>
<div class="ls" style="left:192px;width:80.5px">2023<i class="p" style="width:8.5px">.</i>05<i class="p" style="width:8.5px">.</i>27</div>
<div class="ls" style="left:277.5px;width:90.5px">22310043</div>
<div style="left:373px;width:170px">白茅根<i class="p" style="width:9px">(</i>免煎<i class="p" style="width:9px">)</i></div>
<div class="ls" style="left:548px;width:62.5px">15g<i class="p" style="width:8.5px">/</i>1g<i class="p" style="width:8.5px">*</i>250g</div>
<div style="left:615.5px;width:21.5px">瓶</div>
<div class="n ls" style="left:642px;width:48.5px"><span>1</span></div>
<div class="n ls" style="left:691.5px;width:82px"><span>262<i class="p" style="width:8.5px">.</i>5000</span></div>
<div class="n ls" style="left:774.5px;width:90px"><span>262<i class="p" style="width:8.5px">.</i>50</span></div>
<div class="n ls" style="left:865.5px;width:94.5px"><span>301<i class="p" style="width:8.5px">.</i>8700</span></div>
<div class="n ls" style="left:961px;width:74px"><span>301<i class="p" style="width:8.5px">.</i>87</span></div>
<div class="n ls" style="left:1036px;width:50px"><span>39<i class="p" style="width:8.5px">.</i>37</span></div>
</div>
<div class="hl" style="top:280.80px"></div>
<div class="hl" style="top:708.5px;background:#b5b5b5"></div>
<div class="hl" style="top:730.5px;background:#a0a0a0"></div>
<div class="r" style="top:708.5px">
<div style="left:373px;width:174px">合<i class="p" style="width:9px">&nbsp;</i><i class="p" style="width:9px">&nbsp;</i>计</div>
<div class="ls" style="left:548px;width:66.5px"><span>10</span></div>
<div class="ls" style="left:642px;width:48.5px"><span>20<i class="p" style="width:8.5px">.</i>44</span></div>
<div class="n ls" style="left:774.5px;width:90px"><span>6416<i class="p" style="width:8.5px">.</i>03</span></div>
<div class="n ls" style="left:961px;width:74px"><span>7378<i class="p" style="width:8.5px">.</i>40</span></div>
<div class="n ls" style="left:1036px;width:50px"><span>962<i class="p" style="width:8.5px">.</i>37</span></div>
</div>
</div>
<div class="a" style="left:1480px;top:160px;width:19px;height:732px;background:#f0f0f0"></div>
<div class="a" style="left:1485.500px;top:880.500px;border:4px solid transparent;border-top:4.500px solid #222;border-bottom:0"></div>
<div class="a" style="left:0;top:892px;width:1500px;height:21px;background:#ececec;border-top:1px solid #d8d8d8"></div>
<div class="a" style="left:1467.500px;top:897px;border:5px solid transparent;border-left:5.500px solid #222;border-right:0"></div>
<div class="a" style="left:0;top:913px;width:1504px;height:8px;background:#f0f0f0;border-top:1.500px solid #a6a6a6"></div>
<div class="a" style="left:0;top:917px;width:92px;height:6px;border:1px solid #8a8a8a;border-bottom:0"></div>
</div>
<div class="a" style="left:1505px;top:0;width:47px;height:921px;background:#222"></div>
<div id="pdf" class="a"><div class="a" style="left:0;top:0;width:619px;height:35px;background:#e9e9e9"></div><div class="a" style="left:0;top:0;width:100px;height:35px;background:#f5821f"></div><svg class="a" style="left:40px;top:7.6px" width="19" height="20" viewBox="0 0 21 22" fill="none" ><path d="M19 2.500C15.500 .8 9 .5 5 4.500 1 8.500 1.500 15.500 6.500 19c4.500 3 10.500 1 12.500-4 1-2.500.8-5 0-6.500-2 1.500-4.500 2.500-7.500 2.500 2 1.200 4 1.300 5 1-.5 3-3 4.500-5.500 4.300C7.500 16 5.800 13 6.300 10 6.800 6.500 10 4.500 13 5c1.500.3 2.800 1 3.500 2C17 5.500 18 3.800 19 2.500z" fill="#fff"/></svg><svg class="a" style="left:119.5px;top:8.5px" width="20" height="18" viewBox="0 0 20 18" fill="none" ><path d="M2 16V1.500h5.500l1.500 2.500H17v3.500" stroke="#8c8c8c" stroke-width="1.300"/><path d="M2 16l3.200-8.500H19l-3.200 8.500z" stroke="#8c8c8c" stroke-width="1.300"/></svg><svg class="a" style="left:155.5px;top:6.5px" width="21" height="21" viewBox="0 0 18 18" fill="none" ><path d="M2 2h12l2 2v12H2z M5 2v5h7V2 M5 16v-5h8v5" stroke="#cfcfcf" stroke-width="1.200"/></svg><svg class="a" style="left:191.5px;top:6.65px" width="23" height="20.7" viewBox="0 0 20 18" fill="none" ><path d="M5.500 6V1.500h9V6 M5.500 13H2V6h16v7h-3.500 M5.500 10.500h9v6h-9z" stroke="#8c8c8c" stroke-width="1.200"/></svg><svg class="a" style="left:228.5px;top:6.65px" width="23" height="20.7" viewBox="0 0 20 18" fill="none" ><path d="M11 15.500H3V2h7l3 3v5 M10 2v3h3" stroke="#8c8c8c" stroke-width="1.300"/><path d="M15 11v6M12 14h6" stroke="#8c8c8c" stroke-width="1.200"/></svg><svg class="a" style="left:265px;top:6px" width="22" height="22" viewBox="0 0 18 18" fill="none" ><path d="M4 3v5h5 M4.500 8c2-4 9-4 10 1s-3 7-8 6.500" stroke="#cfcfcf" stroke-width="1.300"/></svg><svg class="a" style="left:303px;top:6px" width="22" height="22" viewBox="0 0 18 18" fill="none" ><path d="M14 3v5h-5 M13.500 8c-2-4-9-4-10 1s3 7 8 6.500" stroke="#cfcfcf" stroke-width="1.300"/></svg><svg class="a" style="left:339px;top:7.5px" width="18" height="20" viewBox="0 0 18 20" fill="none" ><path d="M6.500 10V3.500c0-1.600 2.400-1.600 2.400 0V9 M8.900 9V7.500c0-1.500 2.300-1.500 2.300 0V9.500 M11.200 9.500V8.500c0-1.400 2.200-1.400 2.200 0v2 M13.400 10.500c0-1.300 2.100-1.300 2.100 0V13c0 3.500-2 5.500-5 5.500-2.500 0-3.500-1-5-3.500L3 11.500c-.8-1.300 1-2.300 2-1l1.500 2" stroke="#8c8c8c" stroke-width="1.200"/><path d="M5 4.500c.5-3 5-3 5.500 0" stroke="#8c8c8c" stroke-width="1"/></svg><div class="a" style="left:358px;top:16px;border:4px solid transparent;border-top:5px solid #333;border-bottom:0"></div><div class="a" style="left:384px;top:9px;width:1px;height:18px;background:#d2d2d2"></div><svg class="a" style="left:397.5px;top:11px" width="16" height="14" viewBox="0 0 16 14" fill="none" ><path d="M1 1.500h14" stroke="#444" stroke-width="1.400"/><path d="M2 5.500l6 6.500 6-6.500z" stroke="#444" stroke-width="1.400"/></svg><div class="a" style="left:542px;top:7px;font-size:14px;line-height:20px;color:#666;white-space:nowrap">123.pdf - 福昕阅读器</div><div class="a" style="left:89.500px;top:42.500px;width:52px;height:21.500px;border-radius:11px;background:#ee7d1f"></div><span class="tab" style="left:52.4px;">文件</span><span class="tab" style="left:115.4px;color:#fff;">主页</span><span class="tab" style="left:179px;">注释</span><span class="tab" style="left:243px;">转换</span><span class="tab" style="left:307px;">视图</span><span class="tab" style="left:371px;">表单</span><span class="tab" style="left:435px;">保护</span><span class="tab" style="left:499px;">共享</span><span class="tab" style="left:563px;">浏览</span><span class="tab" style="left:641px;">特色功能</span><div class="a" style="left:4.500px;top:77.500px;width:46.500px;height:78.500px;background:#e2e2e2;border-radius:2px"></div><div class="rs" style="left:197.6px"></div><div class="rs" style="left:409.6px"></div><div class="rs" style="left:514.4px"></div><svg class="a" style="left:12px;top:83px" width="35" height="31" viewBox="0 0 30 30" fill="none" preserveAspectRatio="none"><path d="M10.500 15V6.200c0-2.200 3-2.200 3 0V14 M13.500 13V4c0-2.200 3-2.200 3 0V13 M16.500 13V5.500c0-2.200 3-2.200 3 0V14.500 M19.500 14.500V9c0-2.100 2.900-2.100 2.900 0V18c0 6-3 10-8.500 10-4 0-6-2-8-5.500L3 17.500c-1.200-2.100 1.600-3.600 3-1.600l2.500 3.400c.6.800 2 .5 2-.6V14" stroke="#2b2b2b" stroke-width="1.500" stroke-linejoin="round"/></svg><span class="lb" style="left:28px;top:119px">手型</span><span class="lb" style="left:28px;top:137px">工具</span><svg class="a" style="left:59px;top:83px" width="32" height="30" viewBox="0 0 32 30" fill="none" ><path d="M2.500 3.500h20M12.500 3.500v23M7.500 26.500h10" stroke="#2b2b2b" stroke-width="1.500"/><path d="M19 17l0 10.500 2.800-2.500 2 4.200 1.800-.9-2-4 3.800-.3z" stroke="#e8782a" stroke-width="1.300" fill="#fff"/></svg><span class="lb" style="left:74.5px;top:119px">选择</span><div class="a" style="left:70px;top:142px;border:4.500px solid transparent;border-top:5px solid #222;border-bottom:0"></div><svg class="a" style="left:107px;top:83px" width="32" height="30" viewBox="0 0 32 30" fill="none" ><path d="M5.500 1v22.500H31 M1 5.500h23.500V29" stroke="#2b2b2b" stroke-width="1.500"/><path d="M9 20l4.500-7 3.500 4 3-5.500 3.500 8.500z" stroke="#e8782a" stroke-width="1.300"/><circle cx="10" cy="9.500" r="1.300" fill="#e8782a"/></svg><span class="lb" style="left:122px;top:119px">截图</span><svg class="a" style="left:156px;top:83px" width="26" height="30" viewBox="0 0 26 30" fill="none" ><rect x="2" y="5" width="22" height="23" rx="1.500" stroke="#2b2b2b" stroke-width="1.500"/><path d="M7.500 13h11M7.500 17.500h11M7.500 22h11" stroke="#2b2b2b" stroke-width="1.500"/><path d="M7 6.500V4.500h3.500c0-3 5-3 5 0H19v2z" stroke="#e8782a" stroke-width="1.300" fill="#fbe3d0"/></svg><span class="lb" style="left:169px;top:119px">剪贴</span><span class="lb" style="left:170px;top:137px">板<b class="dn"></b></span><svg class="a" style="left:212px;top:84px" width="30" height="30" viewBox="0 0 30 30" fill="none" ><circle cx="13.500" cy="13.500" r="12" stroke="#2b2b2b" stroke-width="1.500"/><path d="M22.500 22.500l6 6" stroke="#2b2b2b" stroke-width="1.500"/><path d="M13.500 7v13M7 13.500h13" stroke="#e8782a" stroke-width="1.300"/></svg><span class="lb" style="left:226.5px;top:119px">缩放</span><div class="a" style="left:222px;top:142px;border:4.500px solid transparent;border-top:5px solid #222;border-bottom:0"></div><svg class="a" style="left:266.5px;top:83px" width="26" height="30" viewBox="0 0 26 30" fill="none" ><path d="M2 2h15l7 7v19H2z M17 2v7h7" stroke="#2b2b2b" stroke-width="1.500" stroke-linejoin="round"/><path d="M12.500 8v15M9.500 11l3-3.300 3 3.300M9.500 20l3 3.300 3-3.300" stroke="#e8782a" stroke-width="1.300"/></svg><span class="lb" style="left:280px;top:119px">页面适</span><span class="lb" style="left:281px;top:137px">应选项<b class="dn"></b></span><svg class="a" style="left:322px;top:83px" width="26" height="30" viewBox="0 0 26 30" fill="none" ><path d="M2 2h15l7 7v19H2z M17 2v7h7" stroke="#2b2b2b" stroke-width="1.500" stroke-linejoin="round"/><path d="M8.500 12.500h9M13 12.500v10M11 22.500h4" stroke="#e8782a" stroke-width="1.300"/></svg><span class="lb" style="left:334.5px;top:119px">重排</span><svg class="a" style="left:368px;top:82px" width="28" height="30" viewBox="0 0 28 30" fill="none" ><path d="M8 21H4c-1.500 0-2-.5-2-2V4c0-1.500.5-2 2-2h9c1.500 0 2 .5 2 2v4" stroke="#2b2b2b" stroke-width="1.500"/><path d="M8 28V16c0-1.500.5-2 2-2h14c1.500 0 2 .5 2 2v10c0 1.500-.5 2-2 2z" stroke="#2b2b2b" stroke-width="1.500"/><path d="M15 9.500c4-1 8 .5 9 5M24.500 9.500l-.3 5-4.700-.8" stroke="#e8782a" stroke-width="1.300"/></svg><span class="lb" style="left:381px;top:119px">旋转</span><span class="lb" style="left:382px;top:137px">视图<b class="dn"></b></span><svg class="a" style="left:425px;top:84px" width="30" height="28" viewBox="0 0 30 28" fill="none" ><path d="M2 3.500h18M11 3.500v21M7 24.500h8" stroke="#2b2b2b" stroke-width="1.500"/><path d="M23 2h5M25.500 2v24M23 26h5" stroke="#e8782a" stroke-width="1.300"/></svg><span class="lb" style="left:438.5px;top:119px">打</span><span class="lb" style="left:438.5px;top:137px">字机</span><svg class="a" style="left:472px;top:82px" width="28" height="30" viewBox="0 0 28 30" fill="none" ><path d="M19.500 2l5.500 4-9.500 13-5.500-4z M10 15l-1.500 4.500 3 2.200 4-2.700 M8.500 19.500L5 22l4.500 0z" stroke="#2b2b2b" stroke-width="1.500" stroke-linejoin="round"/><path d="M3 26.500h22" stroke="#e8b820" stroke-width="2.200"/></svg><span class="lb" style="left:486px;top:119px">高亮</span><svg class="a" style="left:529.5px;top:83px" width="28" height="30" viewBox="0 0 28 30" fill="none" ><path d="M7 24H4c-1.500 0-2-.5-2-2V4c0-1.500.5-2 2-2h11" stroke="#2b2b2b" stroke-width="1.500"/><path d="M7 5.500h12l6 6V28H7z M19 5.500v6h6" stroke="#2b2b2b" stroke-width="1.500" stroke-linejoin="round"/></svg><span class="lb" style="left:543px;top:119px">文件</span><span class="lb" style="left:544px;top:137px">转换<b class="dn"></b></span><svg class="a" style="left:577px;top:84px" width="28" height="28" viewBox="0 0 28 28" fill="none" ><path d="M3 10V4c0-1.500.5-2 2-2h11l6 6v3 M16 2v6h6 M3 17v6c0 1.500.5 2 2 2h6 M1 13.500h11" stroke="#2b2b2b" stroke-width="1.500" stroke-linejoin="round"/><rect x="15" y="15" width="11.500" height="10.500" rx="1" stroke="#2b2b2b" stroke-width="1.500"/><path d="M15 19h11.500" stroke="#2b2b2b" stroke-width="1.500"/></svg><span class="lb" style="left:590px;top:119px">从扫</span><span class="lb" style="left:590px;top:137px">描仪</span><div class="a" style="left:0;top:162px;width:619px;height:1px;background:#dcdcdc"></div><div class="a" style="left:0;top:201px;width:45px;height:1px;background:#e4e4e4"></div><svg class="a" style="left:10.5px;top:180.5px" width="20" height="20" viewBox="0 0 20 20" fill="none" ><path d="M2.500 12L11.500 2l6 5.500-9 10H2.500z M2.500 12l6 5.500" stroke="#222" stroke-width="1.400" stroke-linejoin="round"/></svg><div class="a" style="left:43.500px;top:171.500px;width:161px;height:31px;border:1px solid #dedede;border-bottom:0;border-radius:6px 6px 0 0;background:#fff"></div><span class="a" style="left:53px;top:181.500px;font-family:'Liberation Mono',monospace;font-weight:bold;font-size:11px;letter-spacing:1px;line-height:16px;color:#dd7428;white-space:nowrap">123.pdf</span><svg class="a" style="left:189px;top:183px" width="10" height="10" viewBox="0 0 10 10" fill="none" ><path d="M1 1l8 8M9 1l-8 8" stroke="#555" stroke-width="1.100"/></svg><div class="a" style="left:44px;top:201.500px;width:580px;height:468px;background:#dedede"></div><div class="a" style="left:0;top:201.500px;width:45px;height:470px;background:#fff"></div><div class="a" style="left:0;top:201px;width:44px;height:1px;background:#e6e6e6"></div><svg class="a" style="left:14.5px;top:233.5px" width="18" height="24" viewBox="0 0 18 24" fill="none" ><path d="M1.500 1.500h15v20l-7.500-7-7.500 7z" stroke="#222" stroke-width="1.500" stroke-linejoin="miter"/></svg><svg class="a" style="left:14px;top:282.5px" width="20" height="26" viewBox="0 0 20 26" fill="none" ><path d="M5.500 5.500H2.500c-.6 0-1 .4-1 1V23c0 .6.400 1 1 1h9c.6 0 1-.4 1-1v-2.500" stroke="#222" stroke-width="1.400"/><path d="M5.500 2.500c0-.6.400-1 1-1h7.500l4.500 4.500v13.500c0 .6-.4 1-1 1h-11c-.6 0-1-.4-1-1z M14 1.500v4.500h4.500" stroke="#222" stroke-width="1.400" fill="#fff" stroke-linejoin="round"/></svg><svg class="a" style="left:12.2px;top:334.55px" width="22" height="20.3" viewBox="0 0 26 24" fill="none" ><ellipse cx="11.500" cy="10" rx="10" ry="8" stroke="#222" stroke-width="1.500"/><path d="M6 17l-1.500 4.500 5.500-3" stroke="#222" stroke-width="1.500" fill="#fff"/><path d="M22 12.500c2 1.500 2.500 4.500 0 7l1 3-4-1.500c-2 .8-5 .5-6.500-1" stroke="#222" stroke-width="1.400"/><circle cx="7" cy="10" r="1.300" fill="#222"/><circle cx="11.500" cy="10" r="1.300" fill="#222"/><circle cx="16" cy="10" r="1.300" fill="#222"/></svg><div class="a" style="left:49px;top:432px;border:5px solid transparent;border-left:7px solid #111;border-right:0"></div><div id="page" class="a"><span class="t" style="left:101px;top:16.7px;font-size:17.5px;line-height:21px;font-weight:500">福州市长乐区妇幼保健院中药房退库单<i style="display:inline-block;text-align:center;font-style:normal;width:8.75px">(</i>补打<i style="display:inline-block;text-align:center;font-style:normal;width:8.75px">)</i></span><span class="t" style="left:26.5px;top:34.6px;font-size:13.5px;line-height:16.2px;font-weight:500">日期<i style="display:inline-block;text-align:center;font-style:normal;width:6.75px">:</i><i style="display:inline-block;text-align:center;font-style:normal;width:6.75px">2</i><i style="display:inline-block;text-align:center;font-style:normal;width:6.75px">0</i><i style="display:inline-block;text-align:center;font-style:normal;width:6.75px">2</i><i style="display:inline-block;text-align:center;font-style:normal;width:6.75px">3</i><i style="display:inline-block;text-align:center;font-style:normal;width:6.75px">.</i><i style="display:inline-block;text-align:center;font-style:normal;width:6.75px">0</i><i style="display:inline-block;text-align:center;font-style:normal;width:6.75px">5</i><i style="display:inline-block;text-align:center;font-style:normal;width:6.75px">.</i><i style="display:inline-block;text-align:center;font-style:normal;width:6.75px">2</i><i style="display:inline-block;text-align:center;font-style:normal;width:6.75px">7</i></span><span class="t" style="left:238.5px;top:34.6px;font-size:13.5px;line-height:16.2px;font-weight:500">退库部门<i style="display:inline-block;text-align:center;font-style:normal;width:6.75px">:</i>中药库</span><span class="t" style="left:12px;top:286.5px;font-size:14.5px;line-height:17.4px;font-weight:500">主任<i style="display:inline-block;text-align:center;font-style:normal;width:7.25px">:</i></span><span class="t" style="left:301px;top:286.5px;font-size:14.5px;line-height:17.4px;font-weight:500">经办人<i style="display:inline-block;text-align:center;font-style:normal;width:7.25px">:</i></span><span class="t" style="left:527px;top:286.5px;font-size:14.5px;line-height:17.4px;font-weight:500">打印人<i style="display:inline-block;text-align:center;font-style:normal;width:7.25px">:</i></span><div id="ptab" class="a" style="left:10px;top:51px;width:600px"><div class="v" style="left:117px"></div><div class="v" style="left:180.5px"></div><div class="v" style="left:207px"></div><div class="v" style="left:271px"></div><div class="v" style="left:334.5px"></div><div class="v" style="left:397px"></div><div class="v" style="left:461px"></div><div class="v" style="left:524px"></div><div class="h" style="top:16.88px;width:600px"></div><div class="h" style="top:34.96px;width:600px"></div><div class="h" style="top:53.04px;width:600px"></div><div class="h" style="top:71.12px;width:600px"></div><div class="h" style="top:89.20px;width:600px"></div><div class="h" style="top:107.28px;width:600px"></div><div class="h" style="top:125.36px;width:600px"></div><div class="h" style="top:143.44px;width:600px"></div><div class="h" style="top:161.52px;width:600px"></div><div class="h" style="top:179.60px;width:600px"></div><div class="h" style="top:197.68px;width:600px"></div><div class="c" style="left:0.2px;top:-2px;width:118.1px;text-align:center">品　　名</div><div class="c" style="left:118.3px;top:-2px;width:63.2px;text-align:center">规　格</div><div class="c" style="left:181.5px;top:-2px;width:26.8px;text-align:center">单位</div><div class="c" style="left:208.3px;top:-2px;width:63.9px;text-align:center">数　量</div><div class="c" style="left:272.2px;top:-2px;width:63.3px;text-align:center">购 进 价</div><div class="c" style="left:335.5px;top:-2px;width:62.9px;text-align:center">购进金额</div><div class="c" style="left:398.4px;top:-2px;width:63.9px;text-align:center">零 售 价</div><div class="c" style="left:462.3px;top:-2px;width:62.9px;text-align:center">零售金额</div><div class="c" style="left:525.2px;top:-2px;width:62.8px;text-align:left;padding-left:2px">进销差价</div><div class="c" style="left:1.2px;top:15.58px;width:115.6px">白茅根<i>(</i>免煎<i>)</i></div><div class="c" style="left:119.3px;top:15.58px;width:60.7px"><i>1</i><i>5</i><i>g</i><i>/</i><i>1</i><i>g</i><i>*</i><i>2</i><i>5</i><i>0</i><i>g</i></div><div class="c" style="left:182.5px;top:15.58px;width:24.3px">瓶</div><div class="c" style="left:208.3px;top:15.58px;width:45.9px;text-align:right"><i>1</i></div><div class="c" style="left:272.2px;top:15.58px;width:45.3px;text-align:right"><i>2</i><i>6</i><i>2</i><i>.</i><i>5</i></div><div class="c" style="left:335.5px;top:15.58px;width:44.9px;text-align:right"><i>2</i><i>6</i><i>2</i><i>.</i><i>5</i><i>0</i></div><div class="c" style="left:398.4px;top:15.58px;width:45.9px;text-align:right"><i>3</i><i>0</i><i>1</i><i>.</i><i>8</i><i>7</i></div><div class="c" style="left:462.3px;top:15.58px;width:44.9px;text-align:right"><i>3</i><i>0</i><i>1</i><i>.</i><i>8</i><i>7</i></div><div class="c" style="left:525.2px;top:15.58px;width:44.8px;text-align:right"><i>3</i><i>9</i><i>.</i><i>3</i><i>7</i></div><div class="c" style="left:1.2px;top:33.66px;width:115.6px">白茅根<i>(</i>免煎<i>)</i></div><div class="c" style="left:119.3px;top:33.66px;width:60.7px"><i>1</i><i>5</i><i>g</i><i>/</i><i>1</i><i>g</i><i>*</i><i>2</i><i>5</i><i>0</i><i>g</i></div><div class="c" style="left:182.5px;top:33.66px;width:24.3px">瓶</div><div class="c" style="left:208.3px;top:33.66px;width:45.9px;text-align:right"><i>1</i></div><div class="c" style="left:272.2px;top:33.66px;width:45.3px;text-align:right"><i>2</i><i>6</i><i>2</i><i>.</i><i>5</i></div><div class="c" style="left:335.5px;top:33.66px;width:44.9px;text-align:right"><i>2</i><i>6</i><i>2</i><i>.</i><i>5</i><i>0</i></div><div class="c" style="left:398.4px;top:33.66px;width:45.9px;text-align:right"><i>3</i><i>0</i><i>1</i><i>.</i><i>8</i><i>7</i></div><div class="c" style="left:462.3px;top:33.66px;width:44.9px;text-align:right"><i>3</i><i>0</i><i>1</i><i>.</i><i>8</i><i>7</i></div><div class="c" style="left:525.2px;top:33.66px;width:44.8px;text-align:right"><i>3</i><i>9</i><i>.</i><i>3</i><i>7</i></div><div class="c" style="left:1.2px;top:51.74px;width:115.6px">炒鸡内金（免煎）</div><div class="c" style="left:119.3px;top:51.74px;width:60.7px"><i>1</i><i>0</i><i>g</i><i>/</i><i>1</i><i>g</i><i>*</i><i>2</i><i>5</i><i>0</i><i>g</i></div><div class="c" style="left:182.5px;top:51.74px;width:24.3px">瓶</div><div class="c" style="left:208.3px;top:51.74px;width:45.9px;text-align:right"><i>2</i><i>.</i><i>6</i><i>4</i></div><div class="c" style="left:272.2px;top:51.74px;width:45.3px;text-align:right"><i>3</i><i>5</i><i>0</i></div><div class="c" style="left:335.5px;top:51.74px;width:44.9px;text-align:right"><i>9</i><i>2</i><i>4</i><i>.</i><i>0</i><i>0</i></div><div class="c" style="left:398.4px;top:51.74px;width:45.9px;text-align:right"><i>4</i><i>0</i><i>2</i><i>.</i><i>5</i></div><div class="c" style="left:462.3px;top:51.74px;width:44.9px;text-align:right"><i>1</i><i>0</i><i>6</i><i>2</i><i>.</i><i>6</i><i>0</i></div><div class="c" style="left:525.2px;top:51.74px;width:44.8px;text-align:right"><i>1</i><i>3</i><i>8</i><i>.</i><i>6</i><i>0</i></div><div class="c" style="left:1.2px;top:69.82px;width:115.6px">蒲公英<i>(</i>免煎<i>)</i></div><div class="c" style="left:119.3px;top:69.82px;width:60.7px"><i>7</i><i>.</i><i>5</i><i>g</i><i>/</i><i>1</i><i>g</i><i>*</i><i>2</i><i>5</i><i>0</i><i>g</i></div><div class="c" style="left:182.5px;top:69.82px;width:24.3px">瓶</div><div class="c" style="left:208.3px;top:69.82px;width:45.9px;text-align:right"><i>2</i><i>.</i><i>4</i><i>6</i></div><div class="c" style="left:272.2px;top:69.82px;width:45.3px;text-align:right"><i>1</i><i>6</i><i>8</i><i>.</i><i>7</i><i>5</i></div><div class="c" style="left:335.5px;top:69.82px;width:44.9px;text-align:right"><i>4</i><i>1</i><i>5</i><i>.</i><i>1</i><i>3</i></div><div class="c" style="left:398.4px;top:69.82px;width:45.9px;text-align:right"><i>1</i><i>9</i><i>4</i><i>.</i><i>0</i><i>6</i></div><div class="c" style="left:462.3px;top:69.82px;width:44.9px;text-align:right"><i>4</i><i>7</i><i>7</i><i>.</i><i>3</i><i>9</i></div><div class="c" style="left:525.2px;top:69.82px;width:44.8px;text-align:right"><i>6</i><i>2</i><i>.</i><i>2</i><i>6</i></div><div class="c" style="left:1.2px;top:87.90px;width:115.6px">覆盆子<i>(</i>免煎<i>)</i></div><div class="c" style="left:119.3px;top:87.90px;width:60.7px"><i>1</i><i>0</i><i>g</i><i>/</i><i>1</i><i>g</i><i>*</i><i>1</i><i>5</i><i>0</i><i>g</i></div><div class="c" style="left:182.5px;top:87.90px;width:24.3px">瓶</div><div class="c" style="left:208.3px;top:87.90px;width:45.9px;text-align:right"><i>2</i><i>.</i><i>3</i><i>4</i></div><div class="c" style="left:272.2px;top:87.90px;width:45.3px;text-align:right"><i>3</i><i>6</i><i>0</i></div><div class="c" style="left:335.5px;top:87.90px;width:44.9px;text-align:right"><i>8</i><i>4</i><i>2</i><i>.</i><i>4</i><i>0</i></div><div class="c" style="left:398.4px;top:87.90px;width:45.9px;text-align:right"><i>4</i><i>1</i><i>4</i></div><div class="c" style="left:462.3px;top:87.90px;width:44.9px;text-align:right"><i>9</i><i>6</i><i>8</i><i>.</i><i>7</i><i>6</i></div><div class="c" style="left:525.2px;top:87.90px;width:44.8px;text-align:right"><i>1</i><i>2</i><i>6</i><i>.</i><i>3</i><i>6</i></div><div class="c" style="left:1.2px;top:105.98px;width:115.6px">郁金<i>(</i>免煎<i>)</i></div><div class="c" style="left:119.3px;top:105.98px;width:60.7px"><i>2</i><i>0</i><i>g</i><i>/</i><i>1</i><i>g</i><i>*</i><i>2</i><i>5</i><i>0</i><i>g</i></div><div class="c" style="left:182.5px;top:105.98px;width:24.3px">瓶</div><div class="c" style="left:208.3px;top:105.98px;width:45.9px;text-align:right"><i>2</i><i>.</i><i>0</i><i>4</i></div><div class="c" style="left:272.2px;top:105.98px;width:45.3px;text-align:right"><i>1</i><i>0</i><i>5</i><i>0</i></div><div class="c" style="left:335.5px;top:105.98px;width:44.9px;text-align:right"><i>2</i><i>1</i><i>4</i><i>2</i><i>.</i><i>0</i><i>0</i></div><div class="c" style="left:398.4px;top:105.98px;width:45.9px;text-align:right"><i>1</i><i>2</i><i>0</i><i>7</i><i>.</i><i>5</i></div><div class="c" style="left:462.3px;top:105.98px;width:44.9px;text-align:right"><i>2</i><i>4</i><i>6</i><i>3</i><i>.</i><i>3</i><i>0</i></div><div class="c" style="left:525.2px;top:105.98px;width:44.8px;text-align:right"><i>3</i><i>2</i><i>1</i><i>.</i><i>3</i><i>0</i></div><div class="c" style="left:1.2px;top:124.06px;width:115.6px">荔枝核<i>(</i>免煎<i>)</i></div><div class="c" style="left:119.3px;top:124.06px;width:60.7px"><i>1</i><i>0</i><i>g</i><i>/</i><i>1</i><i>g</i><i>*</i><i>1</i><i>5</i><i>0</i><i>g</i></div><div class="c" style="left:182.5px;top:124.06px;width:24.3px">瓶</div><div class="c" style="left:208.3px;top:124.06px;width:45.9px;text-align:right"><i>2</i></div><div class="c" style="left:272.2px;top:124.06px;width:45.3px;text-align:right"><i>1</i><i>8</i><i>0</i></div><div class="c" style="left:335.5px;top:124.06px;width:44.9px;text-align:right"><i>3</i><i>6</i><i>0</i><i>.</i><i>0</i><i>0</i></div><div class="c" style="left:398.4px;top:124.06px;width:45.9px;text-align:right"><i>2</i><i>0</i><i>7</i></div><div class="c" style="left:462.3px;top:124.06px;width:44.9px;text-align:right"><i>4</i><i>1</i><i>4</i><i>.</i><i>0</i><i>0</i></div><div class="c" style="left:525.2px;top:124.06px;width:44.8px;text-align:right"><i>5</i><i>4</i><i>.</i><i>0</i><i>0</i></div><div class="c" style="left:1.2px;top:142.14px;width:115.6px">大青叶<i>(</i>免煎<i>)</i></div><div class="c" style="left:119.3px;top:142.14px;width:60.7px"><i>2</i><i>.</i><i>5</i><i>g</i><i>/</i><i>1</i><i>g</i><i>*</i><i>2</i><i>5</i><i>0</i><i>g</i></div><div class="c" style="left:182.5px;top:142.14px;width:24.3px">瓶</div><div class="c" style="left:208.3px;top:142.14px;width:45.9px;text-align:right"><i>3</i></div><div class="c" style="left:272.2px;top:142.14px;width:45.3px;text-align:right"><i>1</i><i>6</i><i>2</i><i>.</i><i>5</i></div><div class="c" style="left:335.5px;top:142.14px;width:44.9px;text-align:right"><i>4</i><i>8</i><i>7</i><i>.</i><i>5</i><i>0</i></div><div class="c" style="left:398.4px;top:142.14px;width:45.9px;text-align:right"><i>1</i><i>8</i><i>6</i><i>.</i><i>8</i><i>7</i></div><div class="c" style="left:462.3px;top:142.14px;width:44.9px;text-align:right"><i>5</i><i>6</i><i>0</i><i>.</i><i>6</i><i>1</i></div><div class="c" style="left:525.2px;top:142.14px;width:44.8px;text-align:right"><i>7</i><i>3</i><i>.</i><i>1</i><i>1</i></div><div class="c" style="left:1.2px;top:160.22px;width:115.6px">巴戟天<i>(</i>免煎<i>)</i></div><div class="c" style="left:119.3px;top:160.22px;width:60.7px"><i>4</i><i>g</i><i>/</i><i>1</i><i>g</i><i>*</i><i>1</i><i>5</i><i>0</i><i>g</i></div><div class="c" style="left:182.5px;top:160.22px;width:24.3px">瓶</div><div class="c" style="left:208.3px;top:160.22px;width:45.9px;text-align:right"><i>3</i></div><div class="c" style="left:272.2px;top:160.22px;width:45.3px;text-align:right"><i>1</i><i>5</i><i>6</i></div><div class="c" style="left:335.5px;top:160.22px;width:44.9px;text-align:right"><i>4</i><i>6</i><i>8</i><i>.</i><i>0</i><i>0</i></div><div class="c" style="left:398.4px;top:160.22px;width:45.9px;text-align:right"><i>1</i><i>7</i><i>9</i><i>.</i><i>4</i></div><div class="c" style="left:462.3px;top:160.22px;width:44.9px;text-align:right"><i>5</i><i>3</i><i>8</i><i>.</i><i>2</i><i>0</i></div><div class="c" style="left:525.2px;top:160.22px;width:44.8px;text-align:right"><i>7</i><i>0</i><i>.</i><i>2</i><i>0</i></div><div class="c" style="left:1.2px;top:178.30px;width:115.6px">白茅根<i>(</i>免煎<i>)</i></div><div class="c" style="left:119.3px;top:178.30px;width:60.7px"><i>1</i><i>5</i><i>g</i><i>/</i><i>1</i><i>g</i><i>*</i><i>2</i><i>5</i><i>0</i><i>g</i></div><div class="c" style="left:182.5px;top:178.30px;width:24.3px">瓶</div><div class="c" style="left:208.3px;top:178.30px;width:45.9px;text-align:right"><i>0</i><i>.</i><i>9</i><i>6</i></div><div class="c" style="left:272.2px;top:178.30px;width:45.3px;text-align:right"><i>2</i><i>6</i><i>2</i><i>.</i><i>5</i></div><div class="c" style="left:335.5px;top:178.30px;width:44.9px;text-align:right"><i>2</i><i>5</i><i>2</i><i>.</i><i>0</i><i>0</i></div><div class="c" style="left:398.4px;top:178.30px;width:45.9px;text-align:right"><i>3</i><i>0</i><i>1</i><i>.</i><i>8</i><i>7</i></div><div class="c" style="left:462.3px;top:178.30px;width:44.9px;text-align:right"><i>2</i><i>8</i><i>9</i><i>.</i><i>8</i><i>0</i></div><div class="c" style="left:525.2px;top:178.30px;width:44.8px;text-align:right"><i>3</i><i>7</i><i>.</i><i>8</i><i>0</i></div><div class="c" style="left:1.2px;top:196.38px;width:115.6px">合<i>&nbsp;</i>计</div><div class="c" style="left:335.5px;top:196.38px;width:44.9px;text-align:right"><i>6</i><i>4</i><i>1</i><i>6</i><i>.</i><i>0</i><i>2</i></div><div class="c" style="left:462.3px;top:196.38px;width:44.9px;text-align:right"><i>7</i><i>3</i><i>7</i><i>8</i><i>.</i><i>4</i><i>0</i></div><div class="c" style="left:525.2px;top:196.38px;width:44.8px;text-align:right"><i>9</i><i>6</i><i>2</i><i>.</i><i>3</i><i>7</i></div></div></div><div class="a" style="left:69px;top:654px;width:560px;height:15px;background:#f1f1f1"></div><div class="a" style="left:60px;top:652px;width:10px;height:17px;background:#f4f4f4;border:1px solid #444;border-bottom:0"></div><div class="a" style="left:76px;top:658px;border:4px solid transparent;border-right:5px solid #111;border-left:0"></div><div class="a" style="left:91px;top:654px;width:540px;height:14px;background:linear-gradient(#ececec,#dcdcdc 50%,#c9c9c9);border:1px solid #b4b4b4"></div><div class="a" style="left:481px;top:658px;width:7px;height:6px;border-left:1.500px solid #444;border-right:1.500px solid #444"><div style="margin:0 auto;width:1.500px;height:6px;background:#444"></div></div><div class="a" style="left:0;top:668.500px;width:619px;height:34px;background:#fff"></div><svg class="a" style="left:17.5px;top:677px" width="16" height="16" viewBox="0 0 16 16" fill="none" ><path d="M8 1.500L2 8l6 6.500M14 1.500L8 8l6 6.500" stroke="#9b9b9b" stroke-width="1.200"/></svg><svg class="a" style="left:52.5px;top:677px" width="10" height="16" viewBox="0 0 10 16" fill="none" ><path d="M8 1.500L2 8l6 6.500" stroke="#9b9b9b" stroke-width="1.200"/></svg><div class="a" style="left:75.5px;top:672.5px;width:128px;height:24px;border:1px solid #e2e2e2;background:#fff"></div><span class="a" style="left:77px;top:676px;font-family:'Liberation Mono',monospace;font-weight:bold;font-size:14px;line-height:18px;color:#111;letter-spacing:.5px">1/1</span><div class="a" style="left:191px;top:684px;border:4px solid transparent;border-top:5px solid #111;border-bottom:0"></div><svg class="a" style="left:214.5px;top:677px" width="10" height="16" viewBox="0 0 10 16" fill="none" ><path d="M2 1.500L8 8l-6 6.500" stroke="#9b9b9b" stroke-width="1.200"/></svg><svg class="a" style="left:243.5px;top:677px" width="16" height="16" viewBox="0 0 16 16" fill="none" ><path d="M2 1.500L8 8l-6 6.500M8 1.500L14 8l-6 6.500" stroke="#9b9b9b" stroke-width="1.200"/></svg><svg class="a" style="left:272.5px;top:674px" width="22" height="22" viewBox="0 0 22 22" fill="none" ><path d="M5.500 14H2V2.500h8.500 M13 1l-3 3 3 3M10 4h6v3" stroke="#111" stroke-width="1.500"/><rect x="7" y="8.500" width="12" height="11.500" rx="1" stroke="#111" stroke-width="1.600"/></svg><svg class="a" style="left:304.5px;top:674px" width="22" height="22" viewBox="0 0 22 22" fill="none" ><path d="M5.500 14H2V2.500h12v3" stroke="#aaa" stroke-width="1.300"/><rect x="7" y="7" width="12" height="11.500" rx="1" stroke="#aaa" stroke-width="1.300"/><path d="M3 17h6M7 15l2.300 2L7 19" stroke="#aaa" stroke-width="1.100"/></svg><div class="a" style="left:592px;top:619px;width:38px;height:38px;border-radius:19px;background:#3f86f2"></div><svg class="a" style="left:602.5px;top:631px" width="10" height="14" viewBox="0 0 10 14" fill="none" ><path d="M7.500 1.500L2.500 7l5 5.500" stroke="#fff" stroke-width="2.200" stroke-linecap="round" stroke-linejoin="round"/></svg></div>
<div id="chat" class="a"><div id="chd" class="a"><span class="a" style="left:24px;top:10px;font-size:17px;line-height:20px;color:#fff;font-weight:350;white-space:nowrap">小号</span><svg class="a" style="left:61.6px;top:11px" width="18" height="17" viewBox="0 0 18 17" fill="none"><path d="M9 .8l2.500 5.300 5.800.7-4.300 4 1.100 5.700L9 13.700 3.900 16.500 5 10.800.7 6.800l5.800-.7z" fill="#f7cf2b" stroke="#e9b61a" stroke-width=".6"/><path d="M7 6.800h3.600L7.300 10.300h3.700" stroke="#fff" stroke-width="1.300"/></svg><span class="a" style="left:97.5px;top:11.6px;font-size:39px;line-height:40px;color:#fbb366;font-weight:700;letter-spacing:2.800px;white-space:nowrap">認真</span><svg class="a" style="left:235px;top:15px" width="14" height="9" viewBox="0 0 14 9" fill="none"><path d="M1 1.500l6 6 6-6" stroke="#fff" stroke-width="1.100"/></svg><svg class="a" style="left:268px;top:18.5px" width="12" height="2" viewBox="0 0 12 2" fill="none"><path d="M0 1h12" stroke="#fff" stroke-width="1.100"/></svg><svg class="a" style="left:299px;top:13.5px" width="12" height="12" viewBox="0 0 12 12" fill="none"><rect x=".8" y=".8" width="10.400" height="10.400" stroke="#fff" stroke-width="1.100"/></svg><svg class="a" style="left:329px;top:13.5px" width="12" height="12" viewBox="0 0 12 12" fill="none"><path d="M.8.800l10.400 10.400M11.200.800L.8 11.200" stroke="#fff" stroke-width="1.100"/></svg></div><svg class="a" style="left:227.5px;top:53.5px" width="23" height="23" viewBox="0 0 23 23" fill="none"><path d="M4.500 1.200c.8-.5 1.500-.3 2 .5l2 3.500c.4.800.2 1.500-.5 2l-1.300.9c1.200 3.400 3.700 6.200 6.900 7.900l1.200-1.200c.6-.6 1.400-.7 2.100-.2l3.300 2.300c.7.500.8 1.300.3 2l-1 1.400c-1.300 1.600-3.400 1.800-5.600 1C8.500 19.300 3.200 13.600 1.500 7.500.900 5.200 1.600 3 3.300 2z" fill="#a24f3c"/><path d="M12.500 6.200c1.700.6 3 1.900 3.600 3.600" stroke="#a24f3c" stroke-width="1.500" stroke-linecap="round"/><path d="M13.500 2.500c3 1 5.300 3.300 6.300 6.300" stroke="#a24f3c" stroke-width="1.500" stroke-linecap="round"/></svg><svg class="a" style="left:270.5px;top:55.5px" width="25" height="18" viewBox="0 0 25 18" fill="none"><rect x=".5" y=".5" width="19.500" height="17" rx="1.800" fill="#a24f3c"/><path d="M19.500 6.500L24.500 3.300v11.400L19.500 11.500z" fill="#a24f3c"/><path d="M6 4.200c.4-.3.800-.2 1 .2l1.100 1.800c.2.400.1.800-.2 1l-.7.500c.7 1.800 2 3.200 3.700 4.100l.6-.6c.3-.3.700-.4 1.100-.1l1.700 1.200c.4.300.4.700.2 1l-.5.700c-.7.900-1.800 1-2.900.5-3-1.300-5.300-3.800-6.300-7-.3-1.200 0-2.300.9-2.900z" fill="#fff"/></svg><div class="a" style="left:314.7px;top:60.8px;width:5.400px;height:5.400px;border-radius:3px;background:#a24f3c"></div><div class="a" style="left:322.8px;top:60.8px;width:5.400px;height:5.400px;border-radius:3px;background:#a24f3c"></div><div class="a" style="left:330.9px;top:60.8px;width:5.400px;height:5.400px;border-radius:3px;background:#a24f3c"></div><svg class="a" style="left:341.5px;top:85.5px" width="11" height="7" viewBox="0 0 11 7" fill="none"><path d="M.5.500h10M.5 6.500l5-5.500 5 5.500" stroke="#aaa" stroke-width="1"/></svg><svg class="a" style="left:341px;top:350.5px" width="11" height="7" viewBox="0 0 11 7" fill="none"><path d="M.5 6.500h10M.5.500l5 5.500 5-5.500" stroke="#aaa" stroke-width="1"/></svg><div class="a" style="left:0;top:92px;width:81px;height:192px;border-radius:0 6px 6px 0;overflow:hidden;background:linear-gradient(100deg,#0b58d6 0,#0a52cf 45%,#0b49b8 100%)"><span class="a" style="left:10px;top:105px;font-family:'Liberation Serif',serif;font-size:12px;letter-spacing:.6px;line-height:13px;color:#0a2f8a;white-space:nowrap">23DLI</span><span class="a" style="left:10px;top:119px;font-family:'Liberation Serif',serif;font-size:12px;letter-spacing:.9px;line-height:13px;color:#0a2f8a;white-space:nowrap">:bc :9f</span><div class="a" style="left:0;top:167px;width:81px;height:25px;background:linear-gradient(#7d95ba,#8398bb 70%,#c9d0dc)"></div><span class="a" style="left:59px;top:168px;font-size:7.500px;line-height:10px;color:#fff;white-space:nowrap">16:12</span><span class="a" style="left:51px;top:178px;font-size:7.500px;line-height:10px;color:#fff;white-space:nowrap">2023/5/30</span><svg class="a" style="left:8px;top:170px" width="30" height="12" viewBox="0 0 30 12"><circle cx="3" cy="6" r="3.500" fill="none" stroke="#dfe6f0" stroke-width="1"/><rect x="11" y="2" width="7" height="8" fill="#e8e0b0" stroke="#fff" stroke-width=".8"/><path d="M22 4.500h2l2.500-2.500v8L24 7.500h-2z" fill="#eef"/></svg></div><div class="a" style="left:0;top:361px;width:353px;height:1px;background:#e6e6e6"></div><svg class="a" style="left:287px;top:372px" width="18" height="18" viewBox="0 0 18 18" fill="none"><path d="M10.500 7.500L16.500 1.500M11 1.500h5.500V7M7.500 10.500L1.500 16.500M1.500 11v5.500H7" stroke="#8b93a5" stroke-width="1.900"/></svg><svg class="a" style="left:324.7px;top:372px" width="18" height="18" viewBox="0 0 18 18" fill="none"><circle cx="9" cy="9" r="9" fill="#868ea1"/><path d="M9 4.500V9.700h4" stroke="#fff" stroke-width="1.800"/></svg><div class="a" style="left:167.2px;top:453px;width:71.500px;height:27.500px;border:1px solid #d0d0d0;border-radius:3px;background:#fff;font-size:12px;line-height:25.500px;text-align:center;color:#222">关闭(<u>C</u>)</div><div class="a" style="left:253px;top:453px;width:88px;height:27.500px;border-radius:3px;background:#9e5a3b"></div><span class="a" style="left:253px;top:453px;width:62px;font-size:12px;line-height:27.500px;text-align:center;color:#fff">发送(<u>S</u>)</span><div class="a" style="left:315px;top:459.5px;width:1px;height:15px;background:#c08a72"></div><svg class="a" style="left:321.5px;top:464.5px" width="10" height="6" viewBox="0 0 10 6" fill="none"><path d="M.8.800l4.200 4.200 4.200-4.200" stroke="#fff" stroke-width="1.200"/></svg></div>
<div class="a" style="left:1082px;top:80px;width:62px;height:62px;border-radius:31px;background:#f4f7fc;border:1px solid #d4d6da"></div><svg class="a" style="left:1082px;top:80px" width="62" height="62" viewBox="1.5 -6.5 62 62"><path d="M30 11.500L50.500 9.800Q52 9.700 51.700 11.200L47.800 32.200Q47.500 33.700 46 33.400L38.300 32.200z" fill="#12d2da"/><path d="M15.500 17.800L36.800 15.900Q38.300 15.800 38 17.300L33.900 38.800Q33.600 40.300 32.100 40L25.200 38.500Q23.700 38.200 24 36.700L25.600 28.500L17 27.700Q15.500 27.500 15.400 26L15 19.300Q14.900 17.900 15.500 17.800z" fill="#0a6bff"/></svg>
<svg class="a" style="left:0;top:0" width="1552" height="921" viewBox="0 0 1552 921" fill="none"><rect x="776.300" y="847.300" width="100.700" height="60.600" stroke="#f23a3a" stroke-width="2.600"/><path d="M784.500 741.800L820.300 815.200L823.200 814.600L821.800 834L808.300 821.300L814.300 819.600z" fill="#f23a3a"/><rect x="1295.500" y="576" width="69.500" height="38.600" stroke="#f23a3a" stroke-width="2.600"/><path d="M1332.400 618.500L1340.200 640.500L1336.300 640L1332.400 692L1328.400 640L1324.600 640.500z" fill="#f23a3a"/></svg>
</body></html>
